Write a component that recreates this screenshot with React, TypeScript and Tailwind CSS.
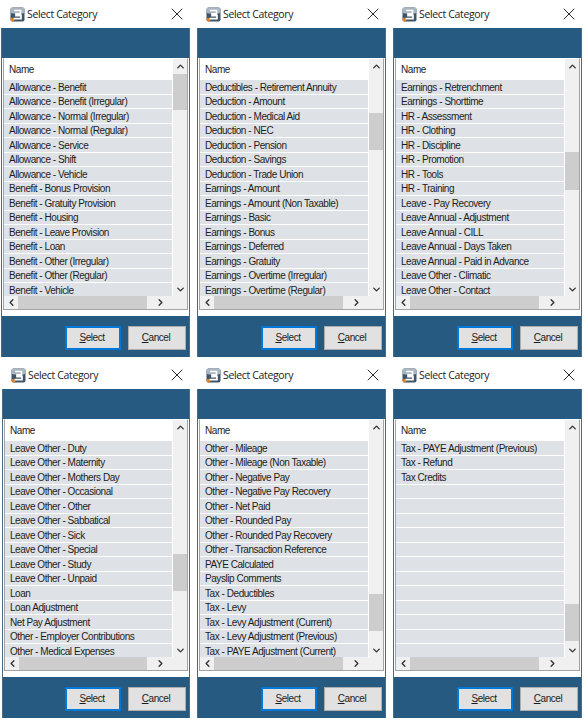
import { ChevronDown, ChevronLeft, ChevronRight, ChevronUp, X } from "lucide-react";

const dialogs = [
  {
    frame: "w-[189px]",
    thumb: "mt-[1px] h-[36px]",
    items: ["Allowance - Benefit", "Allowance - Benefit (Irregular)", "Allowance - Normal (Irregular)", "Allowance - Normal (Regular)", "Allowance - Service", "Allowance - Shift", "Allowance - Vehicle", "Benefit - Bonus Provision", "Benefit - Gratuity Provision", "Benefit - Housing", "Benefit - Leave Provision", "Benefit - Loan", "Benefit - Other (Irregular)", "Benefit - Other (Regular)", "Benefit - Vehicle"],
  },
  {
    frame: "w-[189px]",
    thumb: "mt-[40px] h-[37px]",
    items: ["Deductibles - Retirement Annuity", "Deduction - Amount", "Deduction - Medical Aid", "Deduction - NEC", "Deduction - Pension", "Deduction - Savings", "Deduction - Trade Union", "Earnings - Amount", "Earnings - Amount (Non Taxable)", "Earnings - Basic", "Earnings - Bonus", "Earnings - Deferred", "Earnings - Gratuity", "Earnings - Overtime (Irregular)", "Earnings - Overtime (Regular)"],
  },
  {
    frame: "w-[189px]",
    thumb: "mt-[79px] h-[38px]",
    items: ["Earnings - Retrenchment", "Earnings - Shorttime", "HR - Assessment", "HR - Clothing", "HR - Discipline", "HR - Promotion", "HR - Tools", "HR - Training", "Leave - Pay Recovery", "Leave Annual - Adjustment", "Leave Annual - CILL", "Leave Annual - Days Taken", "Leave Annual - Paid in Advance", "Leave Other - Climatic", "Leave Other - Contact"],
  },
  {
    frame: "ml-px w-[188px]",
    thumb: "mt-[120px] h-[37px]",
    items: ["Leave Other - Duty", "Leave Other - Maternity", "Leave Other - Mothers Day", "Leave Other - Occasional", "Leave Other - Other", "Leave Other - Sabbatical", "Leave Other - Sick", "Leave Other - Special", "Leave Other - Study", "Leave Other - Unpaid", "Loan", "Loan Adjustment", "Net Pay Adjustment", "Other - Employer Contributions", "Other - Medical Expenses"],
  },
  {
    frame: "w-[189px]",
    thumb: "mt-[160px] h-[37px]",
    items: ["Other - Mileage", "Other - Mileage (Non Taxable)", "Other - Negative Pay", "Other - Negative Pay Recovery", "Other - Net Paid", "Other - Rounded Pay", "Other - Rounded Pay Recovery", "Other - Transaction Reference", "PAYE Calculated", "Payslip Comments", "Tax - Deductibles", "Tax - Levy", "Tax - Levy Adjustment (Current)", "Tax - Levy Adjustment (Previous)", "Tax - PAYE Adjustment (Current)"],
  },
  {
    frame: "w-[189px]",
    thumb: "mt-[170px] h-[37px]",
    items: ["Tax - PAYE Adjustment (Previous)", "Tax - Refund", "Tax Credits", "", "", "", "", "", "", "", "", "", "", "", ""],
  },
];

function AppIcon() {
  return (
    <svg width="15" height="15" viewBox="0 0 15 15" className="shrink-0">
      <rect x="0.5" y="0.5" width="14" height="14" rx="2" fill="#3f5468" />
      <rect x="0.5" y="0.5" width="14" height="6" rx="2" fill="#a9b6c2" />
      <path d="M0.5 11h5l-2 3.5H2.5a2 2 0 0 1-2-2z" fill="#d9822b" />
      <path d="M4 3.5h6.5v3.4H6v1.8h5v3H3.6" fill="none" stroke="#fff" strokeWidth="1.7" />
    </svg>
  );
}

function Dialog({ items, thumb, frame }: { items: string[]; thumb: string; frame: string }) {
  return (
    <div className={`flex h-[357px] flex-col bg-white font-['Liberation_Sans',sans-serif] text-[10px] tracking-[-0.45px] text-[#1c1c1c] ${frame}`}>
      <div className="flex h-[28px] shrink-0 items-center pl-[9px] pr-[3px]">
        <AppIcon />
        <span className="ml-[2px] flex-1 pt-[2px] font-['Open_Sans',sans-serif] text-[10.5px] tracking-[-0.35px]">Select Category</span>
        <X size={20} strokeWidth={1} className="text-black" />
      </div>
      <div className="flex flex-1 flex-col border-x border-[#4d6a84] bg-[#275a80]">
        <div className="h-[30px] shrink-0" />
        <div className="flex h-[258px] shrink-0 flex-col bg-white pb-[6px]">
          <div className="mx-[1px] flex min-h-0 flex-1 flex-col border border-[#a3a3a3] border-t-white">
            <div className="flex min-h-0 flex-1">
              <div className="flex min-w-0 flex-1 flex-col overflow-hidden">
                <div className="flex h-[21px] shrink-0 items-center pl-[5px]">Name</div>
                {items.map((name, i) => (
                  <div key={i} className="mb-px flex h-[13.5px] shrink-0 items-center whitespace-nowrap bg-[#dee2e6] pl-[5px] pt-[2px] leading-none">
                    {name}
                  </div>
                ))}
              </div>
              <div className="ml-px flex w-[14px] shrink-0 flex-col bg-[#f0f0f0] text-[#333]">
                <div className="flex h-[14px] shrink-0 items-center justify-center">
                  <ChevronUp size={11} strokeWidth={3} />
                </div>
                <div className="min-h-0 flex-1">
                  <div className={`bg-[#cdcdcd] ${thumb}`} />
                </div>
                <div className="flex h-[14px] shrink-0 items-center justify-center">
                  <ChevronDown size={11} strokeWidth={3} />
                </div>
              </div>
            </div>
            <div className="flex h-[13px] shrink-0 items-center bg-[#f0f0f0] pr-[14px] text-[#333]">
              <div className="flex w-[14px] justify-center">
                <ChevronLeft size={11} strokeWidth={3} />
              </div>
              <div className="h-full flex-1 bg-[#cdcdcd]" />
              <div className="flex w-[26px] justify-center">
                <ChevronRight size={11} strokeWidth={3} />
              </div>
            </div>
          </div>
        </div>
        <div className="flex flex-1 items-center justify-end gap-[7px] pr-[3px] pt-[2px]">
          <button className="flex h-[24px] w-[56px] items-center justify-center border-2 border-[#0078d7] bg-[#e1e1e1] pr-[2px]">
            <span><span className="underline">S</span>elect</span>
          </button>
          <button className="flex h-[24px] w-[58px] items-center justify-center border border-[#adadad] bg-[#e1e1e1] pr-[2px]">
            <span><span className="underline">C</span>ancel</span>
          </button>
        </div>
      </div>
    </div>
  );
}

export default function App() {
  return (
    <div className="grid h-[720px] w-[584px] grid-cols-[189px_189px_189px] content-start gap-x-[7px] gap-y-[4px] bg-white pl-[1px]">
      {dialogs.map((d, i) => (
        <Dialog key={i} items={d.items} thumb={d.thumb} frame={d.frame} />
      ))}
    </div>
  );
}
